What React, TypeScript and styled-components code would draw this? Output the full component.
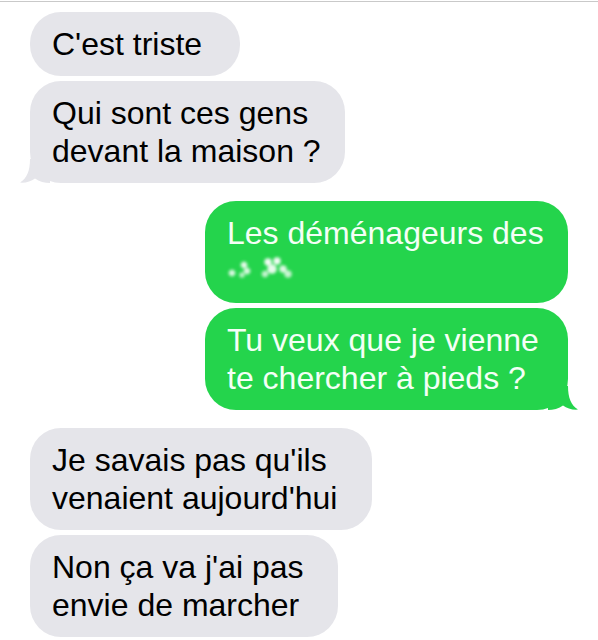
import styled, { createGlobalStyle } from "styled-components";

type Side = "in" | "out";

type MessageProps = {
  side: Side;
  width: number;
  tail?: boolean;
  children?: React.ReactNode;
};

const GRAY = "#e5e5ea";
const GREEN = "#24d44c";

const GlobalStyle = createGlobalStyle`
  html, body {
    margin: 0;
    padding: 0;
    background: #ffffff;
    overflow: hidden;
  }
`;

const Screen = styled.div`
  width: 598px;
  height: 640px;
  overflow: hidden;
  background: #ffffff;
  font-family: "Liberation Sans", Arial, sans-serif;
`;

const TopRule = styled.div`
  height: 1px;
  margin-top: 1px;
  background: #c9c9c9;
`;

const Thread = styled.div`
  display: flex;
  flex-direction: column;
  gap: 18px;
  padding: 10px 30px 0 30px;
`;

const Group = styled.div<{ $side: Side }>`
  display: flex;
  flex-direction: column;
  align-items: ${({ $side }) => ($side === "in" ? "flex-start" : "flex-end")};
  gap: 5px;
`;

const Bubble = styled.div<{ $side: Side; $width: number }>`
  position: relative;
  box-sizing: border-box;
  width: ${({ $width }) => $width}px;
  padding: 13px 20px 13px 22px;
  border-radius: 31px;
  background: ${({ $side }) => ($side === "in" ? GRAY : GREEN)};
  color: ${({ $side }) => ($side === "in" ? "#000000" : "#f4fff6")};
  font-size: 32px;
  line-height: 38px;
  white-space: nowrap;
`;

const Tail = styled.svg<{ $side: Side }>`
  position: absolute;
  bottom: 0;
  width: 30px;
  height: 24px;
  ${({ $side }) =>
    $side === "in" ? "left: -10px;" : "right: -10px; transform: scaleX(-1);"}
`;

// blurred-out name on the second line of the green bubble
const Smudge = styled.span`
  display: inline-block;
  width: 72px;
  height: 38px;
  vertical-align: top;
  filter: blur(1.8px);
  background:
    radial-gradient(circle at 5px 21px, rgba(255, 255, 255, 0.85) 0 2.5px, transparent 4px),
    radial-gradient(circle at 17px 13px, rgba(255, 255, 255, 0.9) 0 2.5px, transparent 4px),
    radial-gradient(circle at 20px 19px, rgba(255, 255, 255, 0.85) 0 2.5px, transparent 4px),
    radial-gradient(circle at 15px 23px, rgba(255, 255, 255, 0.7) 0 2px, transparent 3.5px),
    radial-gradient(circle at 41px 10px, rgba(255, 255, 255, 0.95) 0 3px, transparent 4.5px),
    radial-gradient(circle at 50px 9px, rgba(255, 255, 255, 0.95) 0 3px, transparent 4.5px),
    radial-gradient(circle at 45px 17px, rgba(255, 255, 255, 0.9) 0 4px, transparent 5.5px),
    radial-gradient(circle at 56px 17px, rgba(255, 255, 255, 0.85) 0 3px, transparent 4.5px),
    radial-gradient(circle at 61px 22px, rgba(255, 255, 255, 0.75) 0 3px, transparent 4.5px),
    radial-gradient(circle at 38px 22px, rgba(255, 255, 255, 0.75) 0 2.5px, transparent 4px);
`;

const BubbleTail = ({ side }: { side: Side }) => (
  <Tail $side={side} viewBox="0 0 30 24" aria-hidden>
    <path
      d="M10 0 C10 12 7 19 0 23.6 C6 24 11 22.5 15 19.5 C19 22.5 25 24 30 24 L30 0 Z"
      fill={side === "in" ? GRAY : GREEN}
    />
  </Tail>
);

const Message = ({ side, width, tail, children }: MessageProps) => (
  <Bubble $side={side} $width={width}>
    {children}
    {tail && <BubbleTail side={side} />}
  </Bubble>
);

const App = () => {
  return (
    <Screen>
      <GlobalStyle />
      <TopRule />
      <Thread>
        <Group $side="in">
          <Message side="in" width={210}>
            C'est triste
          </Message>
          <Message side="in" width={315} tail>
            Qui sont ces gens
            <br />
            devant la maison ?
          </Message>
        </Group>
        <Group $side="out">
          <Message side="out" width={363}>
            Les déménageurs des
            <br />
            <Smudge />
          </Message>
          <Message side="out" width={363} tail>
            Tu veux que je vienne
            <br />
            te chercher à pieds ?
          </Message>
        </Group>
        <Group $side="in">
          <Message side="in" width={342}>
            Je savais pas qu'ils
            <br />
            venaient aujourd'hui
          </Message>
          <Message side="in" width={308}>
            Non ça va j'ai pas
            <br />
            envie de marcher
          </Message>
          <Message side="in" width={334}>
            &nbsp;
          </Message>
        </Group>
      </Thread>
    </Screen>
  );
};

export default App;
